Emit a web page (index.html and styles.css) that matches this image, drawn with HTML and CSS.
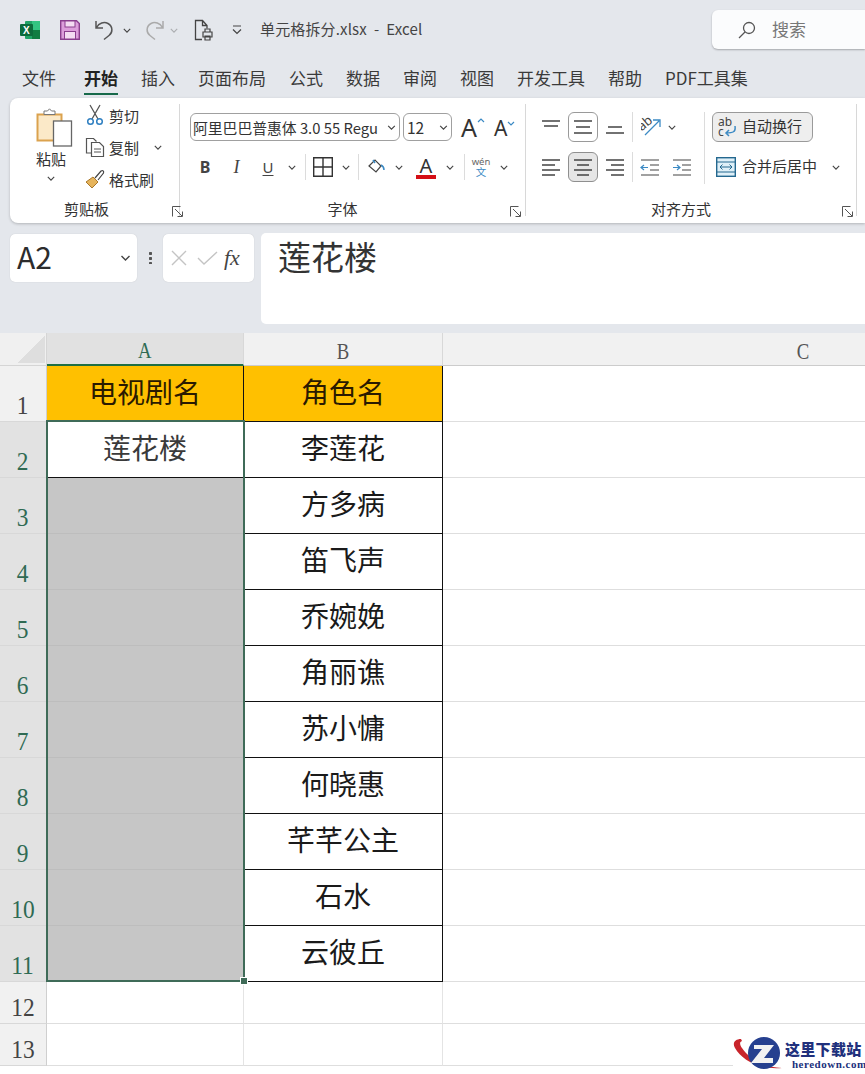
FILE: index.html
```html
<!DOCTYPE html>
<html lang="zh">
<head>
<meta charset="utf-8">
<title>单元格拆分.xlsx - Excel</title>
<link rel="stylesheet" href="styles.css">
</head>
<body>
<svg class="defs" width="0" height="0" aria-hidden="true">
  <symbol id="chev" viewBox="0 0 10 6"><path d="M1 1l4 4 4-4" fill="none" stroke="#444" stroke-width="1.4"/></symbol>
  <symbol id="launch" viewBox="0 0 11 11"><path d="M.5 10.5V.5h8M3 3l7 7M10.5 5.500v5h-5" fill="none" stroke="#555" stroke-width="1"/></symbol>
</svg>

<header class="titlebar">
  <svg class="qa qa-excel" width="20" height="20" viewBox="0 0 20 20"><rect x="5" y="1" width="15" height="18" rx="1" fill="#21a366"/><rect x="12" y="1" width="8" height="9" fill="#33c481"/><rect x="12" y="10" width="8" height="9" fill="#107c41"/><rect y="4" width="13" height="12" rx="1" fill="#0d6b3c"/><text x="3" y="14" class="xmark">X</text></svg>
  <svg class="qa qa-save" width="20" height="20" viewBox="0 0 20 20"><path d="M.7.7h15.800l2.800 2.800v15.800H.7z" fill="#dc9edb" stroke="#8a3f8e" stroke-width="1.4"/><rect x="5" y="1" width="10" height="6" fill="#f4dcf2" stroke="#8a3f8e"/><rect x="4.500" y="11.500" width="11" height="7.500" fill="#f4dcf2" stroke="#8a3f8e"/></svg>
  <svg class="qa qa-undo" width="20" height="22" viewBox="0 0 20 22"><path d="M1 2v7h7M1.500 8.500C4 4 9 2.500 13 4.500c5 3 5 9 1 12l-5 4" fill="none" stroke="#555" stroke-width="1.500"/></svg>
  <svg class="qa-chev" width="8" height="5"><use href="#chev"/></svg>
  <svg class="qa qa-redo" width="20" height="22" viewBox="0 0 20 22"><path d="M19 2v7h-7M18.500 8.500C16 4 11 2.500 7 4.500c-5 3-5 9-1 12l5 4" fill="none" stroke="#aaa" stroke-width="1.500"/></svg>
  <svg class="qa-chev qa-chev-off" width="8" height="5"><use href="#chev"/></svg>
  <svg class="qa qa-print" width="20" height="22" viewBox="0 0 20 22"><path d="M8 20.500H1.500V1.500h7l4.500 5v3M8.500 1.500v5h4.500" fill="none" stroke="#444" stroke-width="1.300"/><path d="M9 13h9v5H9zM11 13v-3h5v3M11 17h5v4h-5z" fill="#e3e7ec" stroke="#444" stroke-width="1.200"/></svg>
  <svg class="qa-more" width="10" height="10" viewBox="0 0 10 10"><path d="M1 1h8M1 4.500l4 4 4-4" fill="none" stroke="#444" stroke-width="1.200"/></svg>
  <span class="doc-title">单元格拆分.xlsx &nbsp;-&nbsp; Excel</span>
  <div class="search">
    <svg width="18" height="18" viewBox="0 0 18 18"><circle cx="11" cy="7" r="5.500" fill="none" stroke="#555" stroke-width="1.300"/><path d="M7 11l-6 6" stroke="#555" stroke-width="1.300"/></svg>
    <span class="search-text">搜索</span>
  </div>
</header>

<nav class="tabs">
  <span class="tab tab-file">文件</span>
  <span class="tab tab-active">开始</span>
  <span class="tab">插入</span>
  <span class="tab">页面布局</span>
  <span class="tab">公式</span>
  <span class="tab">数据</span>
  <span class="tab">审阅</span>
  <span class="tab">视图</span>
  <span class="tab">开发工具</span>
  <span class="tab">帮助</span>
  <span class="tab">PDF工具集</span>
</nav>

<section class="ribbon">
  <div class="group group-clip">
    <div class="group-body clip-body">
      <div class="paste">
        <svg width="37" height="39" viewBox="0 0 37 39"><path d="M1.500 6.500h24v26h-24z" fill="#fbe9c8" stroke="#dba24e" stroke-width="2"/><path d="M8 6.500h11V3h-3.500L13.500.8 11.500 3H8z" fill="#fff" stroke="#777"/><rect x="17.500" y="13" width="18" height="25" fill="#fff" stroke="#666" stroke-width="1.300"/></svg>
        <span class="paste-label">粘贴</span>
        <svg class="paste-chev" width="8" height="5"><use href="#chev"/></svg>
      </div>
      <div class="clip-list">
        <div class="clip-row">
          <svg width="20" height="22" viewBox="0 0 20 22"><path d="M5 1l8 14M15 1L7 15" stroke="#555" stroke-width="1.300" fill="none"/><circle cx="5.500" cy="17.500" r="2.800" fill="none" stroke="#2f7fc1" stroke-width="1.500"/><circle cx="14.500" cy="17.500" r="2.800" fill="none" stroke="#2f7fc1" stroke-width="1.500"/></svg>
          <span>剪切</span>
        </div>
        <div class="clip-row">
          <svg width="20" height="20" viewBox="0 0 20 20"><path d="M6 16H1.500V1.500h7l3 3" fill="none" stroke="#555" stroke-width="1.200"/><path d="M6.500 5.500h8l4 4v10h-12z" fill="#fff" stroke="#555" stroke-width="1.200"/><path d="M9 12h7M9 15h7" stroke="#555"/></svg>
          <span>复制</span>
          <svg class="copy-chev" width="8" height="5"><use href="#chev"/></svg>
        </div>
        <div class="clip-row">
          <svg width="20" height="20" viewBox="0 0 20 20"><path d="M1 13l7-5 5 5-6 6z" fill="#e6b45c" stroke="#a9782a"/><path d="M10 9l6-7c2-1 3 0 2.500 2L13 11" fill="#fff" stroke="#444" stroke-width="1.200"/></svg>
          <span>格式刷</span>
        </div>
      </div>
    </div>
    <div class="group-foot"><span class="group-name">剪贴板</span><svg class="launch" width="11" height="11"><use href="#launch"/></svg></div>
  </div>

  <div class="group group-font">
    <div class="group-body stack">
      <div class="tool-row">
        <div class="combo combo-font"><span class="combo-text">阿里巴巴普惠体 3.0 55 Regu</span><svg width="9" height="5"><use href="#chev"/></svg></div>
        <div class="combo combo-size"><span class="combo-text">12</span><svg width="9" height="5"><use href="#chev"/></svg></div>
        <span class="grow grow-up">A<svg width="8" height="5"><path d="M1 4l3-3 3 3" fill="none" stroke="#3b8ac4" stroke-width="1.200"/></svg></span>
        <span class="grow grow-down">A<svg width="8" height="5"><path d="M1 1l3 3 3-3" fill="none" stroke="#3b8ac4" stroke-width="1.200"/></svg></span>
      </div>
      <div class="tool-row">
        <span class="glyph glyph-b">B</span>
        <span class="glyph glyph-i">I</span>
        <span class="glyph glyph-u">U</span>
        <span class="mini-chev w18"><svg width="8" height="5"><use href="#chev"/></svg></span>
        <i class="sep sep-a"></i>
        <span class="ico w29"><svg width="20" height="20" viewBox="0 0 20 20"><path d="M.7.7h18.600v18.600H.7zM10 .7v18.600M.7 10h18.600" fill="none" stroke="#333" stroke-width="1.400"/></svg></span>
        <span class="mini-chev w18"><svg width="8" height="5"><use href="#chev"/></svg></span>
        <i class="sep sep-b"></i>
        <span class="ico w30"><svg width="17" height="16" viewBox="0 0 17 16"><path d="M1 7l6-6 6 6-5 6z" fill="#fff" stroke="#444" stroke-width="1.200"/><path d="M5 1l2 3M13 6c2 1 3 3 3 5" fill="none" stroke="#3b8ac4" stroke-width="1.500"/></svg></span>
        <span class="mini-chev w16"><svg width="8" height="5"><use href="#chev"/></svg></span>
        <span class="ico w38 font-color">A</span>
        <span class="mini-chev w10"><svg width="8" height="5"><use href="#chev"/></svg></span>
        <i class="sep sep-c"></i>
        <span class="ico w30 wen"><b>wén</b><em>文</em></span>
        <span class="mini-chev w16"><svg width="8" height="5"><use href="#chev"/></svg></span>
      </div>
    </div>
    <div class="group-foot"><span class="group-name">字体</span><svg class="launch" width="11" height="11"><use href="#launch"/></svg></div>
  </div>

  <div class="group group-align">
    <div class="group-body align-body">
      <div class="align-grid">
        <span class="abtn"><svg width="20" height="16" viewBox="0 0 20 16"><path d="M1 2h18M3 7h14" stroke="#444" stroke-width="1.300"/></svg></span>
        <span class="abtn abtn-border"><svg width="20" height="16" viewBox="0 0 20 16"><path d="M1 2h18M3 8h14M1 14h18" stroke="#444" stroke-width="1.300"/></svg></span>
        <span class="abtn"><svg width="20" height="16" viewBox="0 0 20 16"><path d="M3 8h14M1 14h18" stroke="#444" stroke-width="1.300"/></svg></span>
        <i class="sep sep-tall"></i>
        <span class="orient"><svg width="20" height="20" viewBox="0 0 20 20"><text x="-1" y="10" class="abtext abtext-big" transform="rotate(-40 6 10)">ab</text><path d="M4 18L18 4M12 3h7v7" fill="none" stroke="#3b8ac4" stroke-width="1.300"/></svg><svg width="8" height="5"><use href="#chev"/></svg></span>
        <span class="abtn"><svg width="20" height="18" viewBox="0 0 20 18"><path d="M1 2h18M1 7h13M1 12h18M1 17h13" stroke="#444" stroke-width="1.300"/></svg></span>
        <span class="abtn abtn-on"><svg width="20" height="18" viewBox="0 0 20 18"><path d="M1 2h18M4 7h12M1 12h18M4 17h12" stroke="#444" stroke-width="1.300"/></svg></span>
        <span class="abtn"><svg width="20" height="18" viewBox="0 0 20 18"><path d="M1 2h18M6 7h13M1 12h18M6 17h13" stroke="#444" stroke-width="1.300"/></svg></span>
        <i class="sep sep-tall"></i>
        <span class="indents">
          <svg width="20" height="18" viewBox="0 0 20 18"><path d="M1 2h18M10 7h9M10 12h9M1 17h18" stroke="#444" stroke-width="1.200"/><path d="M8 9.500H1M4 7L1 9.500 4 12" fill="none" stroke="#3b8ac4" stroke-width="1.200"/></svg>
          <svg width="20" height="18" viewBox="0 0 20 18"><path d="M1 2h18M10 7h9M10 12h9M1 17h18" stroke="#444" stroke-width="1.200"/><path d="M1 9.500h7M5 7l3 2.500L5 12" fill="none" stroke="#3b8ac4" stroke-width="1.200"/></svg>
        </span>
      </div>
      <i class="sep sep-wrap"></i>
      <div class="wrap-col">
        <span class="wrap-btn"><svg width="20" height="20" viewBox="0 0 20 20"><text x="1" y="9" class="abtext">ab</text><text x="1" y="19" class="abtext">c</text><path d="M18 9c1 6-2 7-9 7M12 13l-3 3 3 3" fill="none" stroke="#3b8ac4" stroke-width="1.500"/></svg><span class="action-text">自动换行</span></span>
        <span class="merge-btn"><svg width="20" height="20" viewBox="0 0 20 20"><rect x=".7" y=".7" width="18.600" height="18.600" fill="#dff0f8" stroke="#24688f" stroke-width="1.400"/><path d="M1 5h18M1 15h18" stroke="#24688f"/><path d="M4 10h12M6.500 7.500L4 10l2.500 2.500M13.500 7.500L16 10l-2.500 2.500" fill="none" stroke="#24688f"/></svg><span class="action-text">合并后居中</span><svg class="merge-chev" width="8" height="5"><use href="#chev"/></svg></span>
      </div>
    </div>
    <div class="group-foot"><span class="group-name">对齐方式</span><svg class="launch" width="11" height="11"><use href="#launch"/></svg></div>
  </div>
</section>

<section class="formula">
  <div class="namebox"><span>A2</span><svg width="11" height="6"><use href="#chev"/></svg></div>
  <span class="dots"></span>
  <div class="fxbox">
    <svg width="18" height="18" viewBox="0 0 18 18"><path d="M2 2l14 14M16 2L2 16" stroke="#c4c4c4" stroke-width="1.400"/></svg>
    <svg width="21" height="16" viewBox="0 0 21 16"><path d="M1 8l6 6L20 2" fill="none" stroke="#c4c4c4" stroke-width="1.400"/></svg>
    <span class="fx">fx</span>
  </div>
  <div class="formula-input">莲花楼</div>
</section>

<main class="sheet">
  <div class="corner"><i></i></div>
  <div class="colhead colhead-on"><span>A</span></div>
  <div class="colhead"><span>B</span></div>
  <div class="colhead"><span>C</span></div>

  <div class="rowhead"><span>1</span></div>
  <div class="cell head">电视剧名</div>
  <div class="cell head">角色名</div>
  <div class="blank"></div>

  <div class="rowhead rowhead-on"><span>2</span></div>
  <div class="cell cell-soft">莲花楼</div>
  <div class="cell">李莲花</div>
  <div class="blank"></div>

  <div class="rowhead rowhead-on"><span>3</span></div>
  <div class="merged"></div>
  <div class="cell">方多病</div>
  <div class="blank"></div>

  <div class="rowhead rowhead-on"><span>4</span></div>
  <div class="merged"></div>
  <div class="cell">笛飞声</div>
  <div class="blank"></div>

  <div class="rowhead rowhead-on"><span>5</span></div>
  <div class="merged"></div>
  <div class="cell">乔婉娩</div>
  <div class="blank"></div>

  <div class="rowhead rowhead-on"><span>6</span></div>
  <div class="merged"></div>
  <div class="cell">角丽谯</div>
  <div class="blank"></div>

  <div class="rowhead rowhead-on"><span>7</span></div>
  <div class="merged"></div>
  <div class="cell">苏小慵</div>
  <div class="blank"></div>

  <div class="rowhead rowhead-on"><span>8</span></div>
  <div class="merged"></div>
  <div class="cell">何晓惠</div>
  <div class="blank"></div>

  <div class="rowhead rowhead-on"><span>9</span></div>
  <div class="merged"></div>
  <div class="cell">芊芊公主</div>
  <div class="blank"></div>

  <div class="rowhead rowhead-on"><span>10</span></div>
  <div class="merged"></div>
  <div class="cell">石水</div>
  <div class="blank"></div>

  <div class="rowhead rowhead-on"><span>11</span></div>
  <div class="merged"></div>
  <div class="cell">云彼丘</div>
  <div class="blank"></div>

  <div class="rowhead"><span>12</span></div>
  <div class="blank"></div>
  <div class="blank"></div>
  <div class="blank"></div>

  <div class="rowhead"><span>13</span></div>
  <div class="blank"></div>
  <div class="blank"></div>
  <div class="blank"></div>

  <div class="selection"><i class="fill-handle"></i></div>
</main>

<aside class="watermark">
  <svg width="52" height="37" viewBox="0 0 52 37"><path d="M8 2C2 2-1 6 2 11c7 12 24 22 47 20-18-1-33-9-40-20C7 8 6 5 9 4z" fill="#c8242b"/><circle cx="31" cy="16" r="16" fill="#26408f"/><path d="M21 8h20l-10 13h9v5H18l11-14h-8z" fill="#f2f2f2"/></svg>
  <div class="wm-text"><b>这里下载站</b><span>heredown.com</span></div>
</aside>
</body>
</html>
```
FILE: styles.css
```css
* { box-sizing: border-box; }
html, body { margin: 0; height: 100%; }
body {
  width: 865px;
  height: 1074px;
  overflow: hidden;
  position: relative;
  background: #e4e7ec;
  color: #333;
  font-family: "Noto Sans CJK SC", "Noto Sans", sans-serif;
}
.defs { position: absolute; }
svg { display: block; flex: none; }

/* title bar */
.titlebar { height: 60px; display: flex; align-items: center; padding: 0 0 0 20px; }
.xmark { font: bold 10px "Liberation Sans", sans-serif; fill: #fff; }
.qa-save { margin-left: 20px; }
.qa-undo { margin-left: 15px; }
.qa-chev { margin-left: 8px; }
.qa-redo { margin-left: 13px; }
.qa-chev-off { margin-left: 6px; opacity: .35; }
.qa-print { margin-left: 16px; }
.qa-more { margin-left: 18px; }
.doc-title { margin-left: 18px; padding-bottom: 4px; font-size: 15px; letter-spacing: .15px; color: #444; white-space: nowrap; }
.search {
  margin-left: auto;
  width: 153px;
  height: 39px;
  margin-top: -1px;
  background: #fbfcfd;
  border-radius: 6px 0 0 6px;
  box-shadow: 0 1px 2px rgba(0, 0, 0, .28);
  display: flex;
  align-items: center;
  padding-left: 26px;
  gap: 16px;
  color: #777;
  font-size: 17px;
}
.search-text { padding-bottom: 2px; }

/* tabs */
.tabs { height: 38px; display: flex; align-items: center; padding: 0 0 2px 22px; gap: 23px; font-size: 17px; color: #3a3a3a; }
.tab { white-space: nowrap; line-height: 36px; position: relative; }
.tab-file { margin-right: 5px; }
.tab-active { font-weight: 700; color: #222; }
.tab-active::after { content: ""; position: absolute; left: 0; right: 0; bottom: 1px; height: 2.500px; background: #17694a; }

/* ribbon */
.ribbon {
  height: 125px;
  margin-left: 10px;
  background: #fff;
  border-radius: 8px 0 0 8px;
  display: flex;
  box-shadow: 0 1px 3px rgba(0, 0, 0, .22);
  padding-top: 6px;
  overflow: hidden;
}
.group { display: flex; flex-direction: column; border-right: 1px solid #d8d8d8; height: 112px; flex: none; }
.group-clip { width: 170px; }
.group-font { width: 346px; }
.group-align { width: 331px; }
.group-body { height: 97px; flex: none; }
.group-foot { display: grid; grid-template-columns: 1fr auto 1fr; align-items: center; padding-right: 20px; height: 16px; }
.group-clip .group-foot { padding-right: 16px; }
.group-name { font-size: 15px; line-height: 16px; color: #333; grid-column: 2; }
.launch { justify-self: end; margin-right: -16px; margin-top: 4px; }
.group-clip .launch { margin-right: -20px; }
.group-align .launch { margin-right: -17px; }

.clip-body { display: flex; margin-top: -3px; height: 100px; }
.paste { width: 42px; margin-left: 20px; padding-top: 7px; display: flex; flex-direction: column; align-items: center; }
.paste svg:first-child { margin-left: 6px; }
.paste-label { font-size: 15px; line-height: 20px; margin-top: 2px; }
.paste-chev { margin-top: 7px; }
.clip-list { margin: -2px 0 0 13px; display: flex; flex-direction: column; }
.clip-row { height: 32px; display: flex; align-items: center; gap: 4px; font-size: 15px; white-space: nowrap; }
.copy-chev { margin-left: 11px; }

.stack { display: flex; flex-direction: column; gap: 10px; padding: 8px 0 0 10px; }
.tool-row { display: flex; align-items: center; height: 30px; }
.combo { height: 28px; border: 1px solid #a0a0a0; border-radius: 6px; display: flex; align-items: center; justify-content: space-between; padding: 0 3px 0 2px; background: #fff; overflow: hidden; }
.combo-font { width: 210px; font-size: 14.800px; }
.combo-size { width: 49px; margin-left: 3px; font-size: 15.500px; padding-left: 3px; }
.combo-text { white-space: nowrap; flex: 1; color: #333; }
.grow { display: flex; font-family: "Noto Sans", sans-serif; align-items: flex-start; line-height: 1; color: #333; }
.grow svg { margin-top: 3px; }
.grow-up { margin-left: 9px; font-size: 25px; width: 33px; }
.grow-down { font-size: 21px; width: 24px; margin-top: 2px; }
.glyph { width: 30px; text-align: center; font-size: 17px; }
.glyph-b { font-family: "Noto Sans", sans-serif; font-weight: 700; color: #444; font-size: 16px; }
.glyph-i { width: 33px; font-family: "Liberation Serif", serif; font-style: italic; font-size: 18px; color: #444; }
.glyph-u { width: 30px; font-family: "Noto Sans", sans-serif; color: #444; text-decoration: underline; text-underline-offset: 2px; font-size: 15px; }
.mini-chev { display: flex; justify-content: center; }
.w10 { width: 10px; }
.w16 { width: 16px; }
.w18 { width: 18px; }
.ico { display: flex; justify-content: center; align-items: center; height: 30px; }
.w29 { width: 29px; }
.w30 { width: 30px; }
.w38 { width: 38px; }
.sep { display: block; width: 1px; height: 26px; background: #dcdcdc; flex: none; }
.sep-a { margin: 0 2px 0 4px; }
.sep-b { margin: 0 2px 0 3px; }
.sep-c { margin: 0 1px 0 9px; }
.font-color { font-size: 20px; font-family: "Noto Sans", sans-serif; line-height: 20px; flex-direction: column; color: #333; }
.font-color::after { content: ""; display: block; width: 20px; height: 4px; background: #d40f16; margin-top: -1px; }
.wen { flex-direction: column; line-height: 10px; }
.wen b { font-weight: 400; font-size: 9.500px; color: #666; font-family: "Noto Sans", sans-serif; }
.wen em { font-style: normal; font-size: 10.500px; color: #3b8ac4; }

.align-body { display: flex; padding: 8px 0 0 10px; }
.align-grid { display: grid; grid-template-columns: 30px 30px 30px 1px 1fr; grid-auto-rows: 30px; column-gap: 2px; row-gap: 10px; width: 156px; flex: none; }
.abtn { display: flex; align-items: center; justify-content: center; border-radius: 6px; }
.abtn-border { border: 1px solid #9a9a9a; }
.abtn-on { border: 1px solid #8f8f8f; background: #e6e6e6; }
.sep-tall { height: 30px; }
.orient { display: flex; align-items: center; gap: 7px; margin-left: 6px; }
.indents { display: flex; gap: 12px; align-items: center; margin-left: 5px; }
.abtext { font: 12px "Noto Sans", sans-serif; fill: #444; }
.abtext-big { font-size: 13px; }
.sep-wrap { height: 72px; margin: 0 7px 0 12px; }
.wrap-col { display: flex; flex-direction: column; gap: 10px; }
.wrap-btn { width: 101px; height: 30px; border: 1px solid #9a9a9a; border-radius: 6px; background: #eee; display: flex; align-items: center; gap: 5px; font-size: 15px; padding-left: 4px; white-space: nowrap; }
.merge-btn { display: flex; align-items: center; gap: 6px; height: 30px; font-size: 15px; padding-left: 4px; white-space: nowrap; }
.action-text { padding-bottom: 3px; }
.merge-chev { margin-left: 9px; }

/* formula row */
.formula { display: flex; align-items: flex-start; height: 92px; margin-top: 10px; padding-left: 10px; }
.namebox { width: 127px; height: 48px; background: #fff; border-radius: 5px; margin-top: 1px; display: flex; align-items: center; justify-content: space-between; padding: 0 6px 4px 7px; font-size: 30px; color: #2c2c2c; box-shadow: 0 0 1px rgba(0, 0, 0, .2); }
.namebox svg { margin-top: 4px; }
.dots { width: 3px; height: 13px; margin: 18px 11px 0 12px; background: radial-gradient(circle, #555 1.400px, transparent 1.500px) 0 0 / 3px 5px repeat-y; }
.fxbox { width: 91px; height: 48px; margin-top: 1px; background: #fff; border-radius: 5px; display: flex; align-items: center; padding-left: 7px; gap: 9px; box-shadow: 0 0 1px rgba(0, 0, 0, .2); }
.fx { font: italic 22px "Liberation Serif", serif; color: #444; margin-left: -3px; }
.formula-input { flex: 1; height: 91px; margin-left: 7px; background: #fff; border-radius: 5px 0 0 5px; padding: 0 0 0 17px; font-size: 33px; line-height: 47px; color: #333; }

/* sheet */
.sheet {
  position: relative;
  margin-top: 8px;
  height: 741px;
  background: #fff;
  display: grid;
  grid-template-columns: 47px 197px 199px 722px;
  grid-template-rows: 33px repeat(11, 56px) 42px 42px;
  font-family: "Noto Sans CJK SC", sans-serif;
}
.corner { background: #f0f0f0; border-bottom: 1px solid #d5d5d5; border-right: 1px solid #d5d5d5; display: flex; align-items: flex-end; justify-content: flex-end; padding: 0 1px 2px 0; }
.corner i { display: block; width: 27px; height: 28px; background: linear-gradient(to bottom right, transparent 50%, #dedede 50%); }
.colhead { background: #f1f1f1; border-right: 1px solid #d8d8d8; border-bottom: 1px solid #ccc; display: flex; align-items: center; justify-content: center; font: 24px "Liberation Serif", serif; color: #555; overflow: hidden; }
.colhead span { display: block; transform: scaleX(.78); margin-top: 4px; }
.colhead-on { background: #e1e1e1; color: #2f6a53; border-bottom: 2px solid #1f6e43; }
.rowhead { background: #f1f1f1; border-bottom: 1px solid #d8d8d8; border-right: 1px solid #cfcfcf; display: flex; align-items: flex-end; justify-content: center; font: 26px "Liberation Serif", serif; color: #444; overflow: hidden; padding-right: 1px; line-height: 30px; }
.rowhead span { display: block; transform: scaleX(.9); }
.rowhead-on { background: #e2e2e2; color: #2f6a53; }
.cell { border-right: 1px solid #111; border-bottom: 1px solid #111; display: flex; align-items: center; justify-content: center; font-size: 28px; color: #1a1a1a; padding-bottom: 5px; white-space: nowrap; }
.head { background: #ffc000; color: #2a1a00; }
.cell-soft { color: #3a3a3a; }
.blank { border-right: 1px solid #e4e4e4; border-bottom: 1px solid #dedede; }
.merged { background: #c6c6c6; border-bottom: 1px solid #bdbdbd; border-right: 1px solid #111; }
.selection { position: absolute; left: 46px; top: 87px; width: 199px; height: 562px; border: 2px solid #3f6b58; pointer-events: none; }
.fill-handle { position: absolute; right: -4px; bottom: -4px; width: 6px; height: 6px; background: #3f6b58; outline: 1px solid #fff; }

/* watermark */
.watermark { position: absolute; right: 0; bottom: 0; width: 132px; height: 37px; display: flex; background: #fff; }
.wm-text { display: flex; flex-direction: column; align-items: flex-start; }
.wm-text b { font-size: 15px; line-height: 18px; font-weight: 900; color: #20307c; letter-spacing: .3px; margin-top: 3px; }
.wm-text span { font: bold 11px "Liberation Serif", serif; color: #20307c; letter-spacing: .5px; margin-left: 7px; line-height: 13px; }
```
